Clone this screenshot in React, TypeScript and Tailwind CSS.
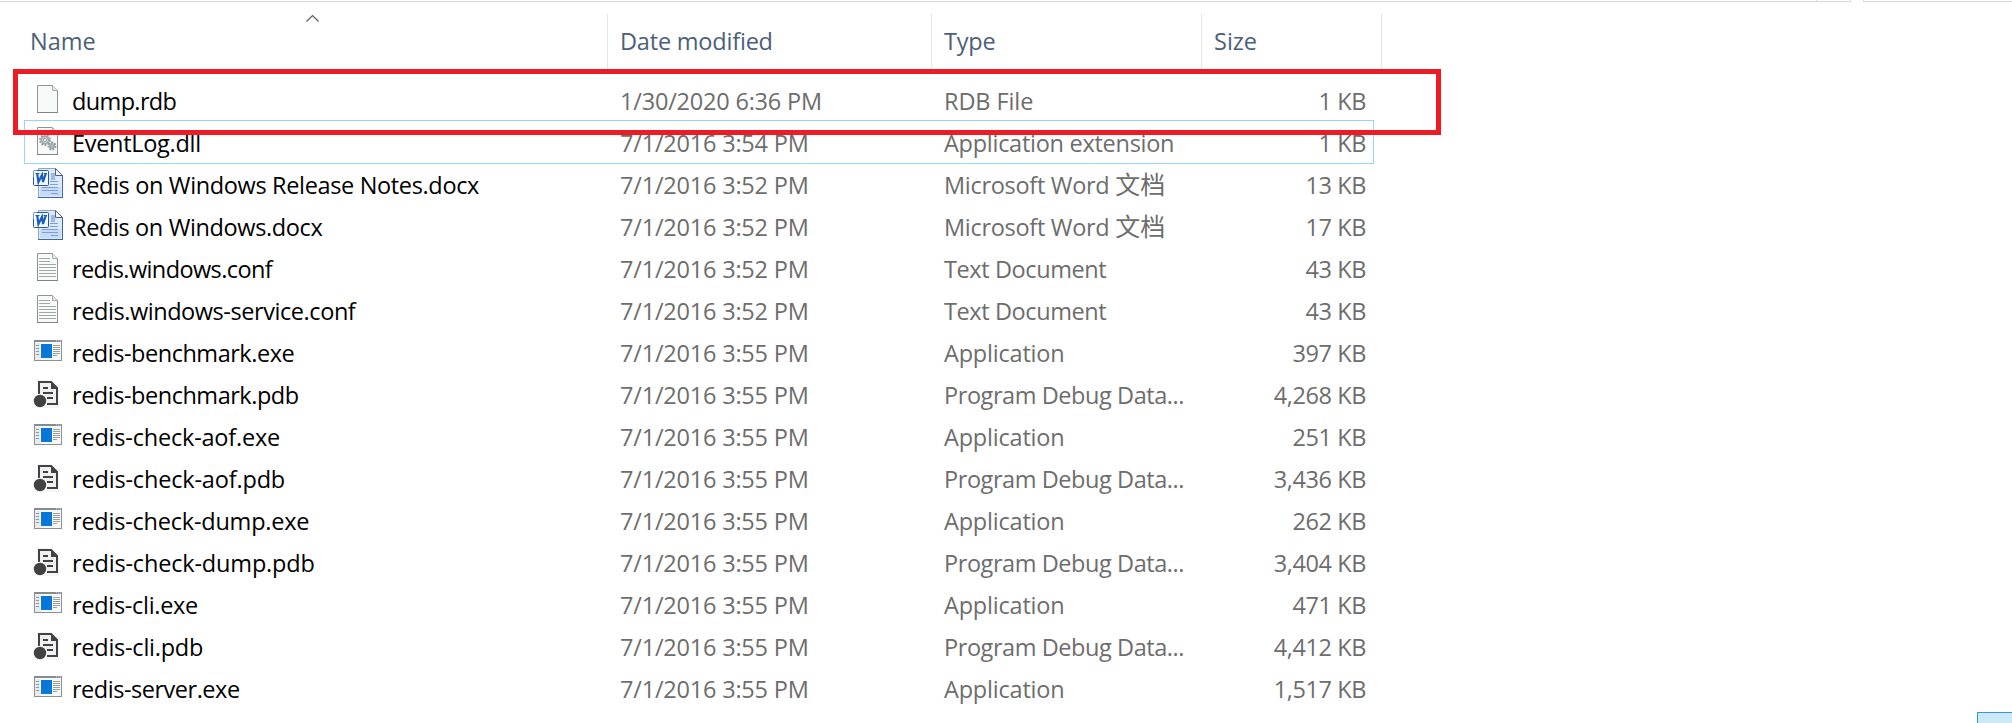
import React from "react";

type Kind = "file" | "dll" | "word" | "text" | "exe" | "pdb";

interface Row {
  name: string;
  date: string;
  type: keyof typeof typeTracking;
  size: string;
  kind: Kind;
  tracking: string;
  focused?: boolean;
}

const typeTracking = {
  "RDB File": "tracking-[-0.1px]",
  "Application extension": "tracking-[-0.27px]",
  "Microsoft Word 文档": "tracking-[-0.3px]",
  "Text Document": "tracking-[-0.4px]",
  Application: "tracking-[-0.2px]",
  "Program Debug Data...": "tracking-[-0.43px]",
};

const rows: Row[] = [
  { name: "dump.rdb", date: "1/30/2020 6:36 PM", type: "RDB File", size: "1 KB", kind: "file", tracking: "tracking-[-0.64px]" },
  { name: "EventLog.dll", date: "7/1/2016 3:54 PM", type: "Application extension", size: "1 KB", kind: "dll", tracking: "tracking-[-0.3px]", focused: true },
  { name: "Redis on Windows Release Notes.docx", date: "7/1/2016 3:52 PM", type: "Microsoft Word 文档", size: "13 KB", kind: "word", tracking: "tracking-[-0.35px]" },
  { name: "Redis on Windows.docx", date: "7/1/2016 3:52 PM", type: "Microsoft Word 文档", size: "17 KB", kind: "word", tracking: "tracking-[-0.37px]" },
  { name: "redis.windows.conf", date: "7/1/2016 3:52 PM", type: "Text Document", size: "43 KB", kind: "text", tracking: "tracking-[-0.6px]" },
  { name: "redis.windows-service.conf", date: "7/1/2016 3:52 PM", type: "Text Document", size: "43 KB", kind: "text", tracking: "tracking-[-0.43px]" },
  { name: "redis-benchmark.exe", date: "7/1/2016 3:55 PM", type: "Application", size: "397 KB", kind: "exe", tracking: "tracking-[-0.47px]" },
  { name: "redis-benchmark.pdb", date: "7/1/2016 3:55 PM", type: "Program Debug Data...", size: "4,268 KB", kind: "pdb", tracking: "tracking-[-0.47px]" },
  { name: "redis-check-aof.exe", date: "7/1/2016 3:55 PM", type: "Application", size: "251 KB", kind: "exe", tracking: "tracking-[-0.2px]" },
  { name: "redis-check-aof.pdb", date: "7/1/2016 3:55 PM", type: "Program Debug Data...", size: "3,436 KB", kind: "pdb", tracking: "tracking-[-0.17px]" },
  { name: "redis-check-dump.exe", date: "7/1/2016 3:55 PM", type: "Application", size: "262 KB", kind: "exe", tracking: "tracking-[-0.22px]" },
  { name: "redis-check-dump.pdb", date: "7/1/2016 3:55 PM", type: "Program Debug Data...", size: "3,404 KB", kind: "pdb", tracking: "tracking-[-0.17px]" },
  { name: "redis-cli.exe", date: "7/1/2016 3:55 PM", type: "Application", size: "471 KB", kind: "exe", tracking: "tracking-[-0.3px]" },
  { name: "redis-cli.pdb", date: "7/1/2016 3:55 PM", type: "Program Debug Data...", size: "4,412 KB", kind: "pdb", tracking: "tracking-[-0.25px]" },
  { name: "redis-server.exe", date: "7/1/2016 3:55 PM", type: "Application", size: "1,517 KB", kind: "exe", tracking: "tracking-[-0.48px]" },
];

function Page() {
  return (
    <>
      <path d="M5.5 6.5H20.5L25.5 11.5V33.5H5.5Z" fill="#f8f9f9" stroke="#8f9192" />
      <path d="M20.5 6.5V11.5H25.5" fill="#e8eaea" stroke="#a9abac" />
      <path d="M5 33.5H26" stroke="#808284" />
    </>
  );
}

function Gear({ cx, cy, r }: { cx: number; cy: number; r: number }) {
  return (
    <g>
      <circle cx={cx} cy={cy} r={r} fill="#c5ccd1" stroke="#929a9f" strokeWidth="2.2" strokeDasharray="1.7 1.3" />
      <circle cx={cx} cy={cy} r={r - 1.2} fill="#c8ced3" stroke="#9aa3a9" strokeWidth="1" />
      <circle cx={cx} cy={cy} r={r * 0.33} fill="#f4f5f5" stroke="#8a9399" strokeWidth="0.8" />
    </g>
  );
}

function FileIcon({ kind }: { kind: Kind }) {
  return (
    <svg width="32" height="42" viewBox="0 0 32 42" fill="none" className="shrink-0">
      {(kind === "file" || kind === "dll" || kind === "text") && <Page />}
      {kind === "dll" && (
        <>
          <Gear cx={13} cy={19} r={4.8} />
          <Gear cx={20} cy={25} r={3.4} />
        </>
      )}
      {kind === "text" && (
        <path
          d="M7 11.5H18M7 14.5H18M7 17.5H24M7 20.5H24M7 23.5H24M7 26.5H24M7 29.5H24"
          stroke="#a2a4a5"
        />
      )}
      {kind === "word" && (
        <>
          <path d="M6.5 5.5H23.5L30.5 12.5V34.5H6.5Z" fill="#dce9fb" stroke="#8ea6cf" />
          <path d="M8 24H29V33H8Z" fill="#c7dbf8" />
          <path d="M6 34.5H31M30.5 12V35" stroke="#3f66ad" />
          <path d="M23.5 5.5V12.5H30.5Z" fill="#f2f6fd" stroke="#4c6189" />
          <rect x="19" y="10" width="4" height="7" fill="#9db9e6" />
          <path d="M18 18.5H26M18 21.5H26M10 24.5H26M10 27.5H26M19 30.5H26" stroke="#7e9fd6" />
          <rect x="1.5" y="7.5" width="15" height="15" rx="1" fill="#f4f8ff" stroke="#2c569f" />
          <path d="M2 7.5H5M1.5 8V14" stroke="#7d9cce" />
          <path d="M3.5 10.5H7.5M11.5 10.5H15" stroke="#1a5fbd" />
          <path d="M5.2 10.5L6.4 19L10 11.8L11 19L13.8 10.5" stroke="#1a5fbd" strokeWidth="2.2" />
        </>
      )}
      {kind === "exe" && (
        <>
          <rect x="2.5" y="9.5" width="27" height="20" fill="#f6f7f7" stroke="#8c9194" />
          <rect x="2" y="9" width="28" height="2" fill="#858a8e" />
          <path d="M24 10H25M26 10H27M28 10H29" stroke="#e4e6e7" />
          <rect x="3" y="12" width="5" height="17" fill="#e8eaec" />
          <path d="M4 14.5H7M4 17.5H7M4 20.5H7M4 23.5H7" stroke="#8f9598" />
          <rect x="9" y="13" width="11" height="14" fill="#0878d8" />
          <path d="M21 14.5H28M21 16.5H28M21 18.5H28M21 20.5H28M21 22.5H28M21 24.5H25" stroke="#9ba0a3" />
        </>
      )}
      {kind === "pdb" && (
        <>
          <path d="M5 7H20L27 14V35H5Z" fill="#f6f6f6" />
          <path d="M7 21V9H19L25 15V31H15" fill="#f0eff1" stroke="#424242" strokeWidth="2" />
          <path d="M19 8L26 15V16H19Z" fill="#424242" />
          <path d="M11 15H16M11 20H21M15 25H21" stroke="#424242" strokeWidth="2" />
          <circle cx="8" cy="28" r="7.3" fill="#f6f6f6" />
          <circle cx="8" cy="28" r="6.2" fill="#424242" />
        </>
      )}
    </svg>
  );
}

function FileRow({ row }: { row: Row }) {
  const [latin, cjk] = row.type.split(/(?=文)/);
  return (
    <div
      className={`grid h-[42px] w-[1348px] grid-cols-[583px_324px_270px_171px] leading-[44px] whitespace-nowrap text-[#6d6d6d] ${
        row.focused ? "outline outline-[#99d1ff]" : ""
      }`}
    >
      <div className="flex h-[42px] gap-2 pl-[7px] text-black">
        <FileIcon kind={row.kind} />
        <span className={row.tracking}>{row.name}</span>
      </div>
      <div className="h-[42px] pl-3 tracking-[-0.2px]">{row.date}</div>
      <div className={`h-[42px] pl-3 ${typeTracking[row.type]}`}>
        {latin}
        {cjk && <span className="text-[25px] leading-none tracking-normal">{cjk}</span>}
      </div>
      <div className="h-[42px] pr-[7px] text-right tracking-[-0.4px]">{row.size}</div>
    </div>
  );
}

export default function App() {
  return (
    <div className="relative h-[723px] w-[2012px] overflow-hidden bg-white font-['Open_Sans','Noto_Sans_CJK_SC',sans-serif] text-[23.5px]">
      <div className="flex h-[2px] gap-3">
        <div className="flex w-[1851px] border-r border-b border-[#d9d9d9]">
          <div className="w-[1817px] border-r border-[#d9d9d9]" />
        </div>
        <div className="flex-1 border-b border-l border-[#d9d9d9]" />
      </div>

      <header className="mt-3 ml-6 grid h-[52px] w-[1358px] grid-cols-[584px_324px_270px_180px] leading-[55px] text-[#4c607a]">
        <div className="relative border-r border-[#e5e5e5] pl-1.5">
          Name
          <svg className="absolute top-0 left-[281px]" width="16" height="10" viewBox="0 0 16 10" fill="none">
            <path d="M1.5 7.5L7.5 1.5L13.5 7.5" stroke="#5c5c5c" strokeWidth="1.2" />
          </svg>
        </div>
        <div className="border-r border-[#e5e5e5] pl-3 tracking-[-0.2px]">Date modified</div>
        <div className="border-r border-[#e5e5e5] pl-3 tracking-[-0.2px]">Type</div>
        <div className="border-r border-[#e5e5e5] pl-3">Size</div>
      </header>

      <main className="mt-[13px] ml-[25px]">
        {rows.map((row) => (
          <FileRow key={row.name} row={row} />
        ))}
      </main>

      <div className="absolute top-[69px] left-[13px] h-[66px] w-[1428px] border-5 border-[#ed1c24]" />
      <div className="absolute right-0 bottom-0 h-[11px] w-[35px] border-t border-l border-[#3399cc] bg-[#cbe8f6]" />
    </div>
  );
}
